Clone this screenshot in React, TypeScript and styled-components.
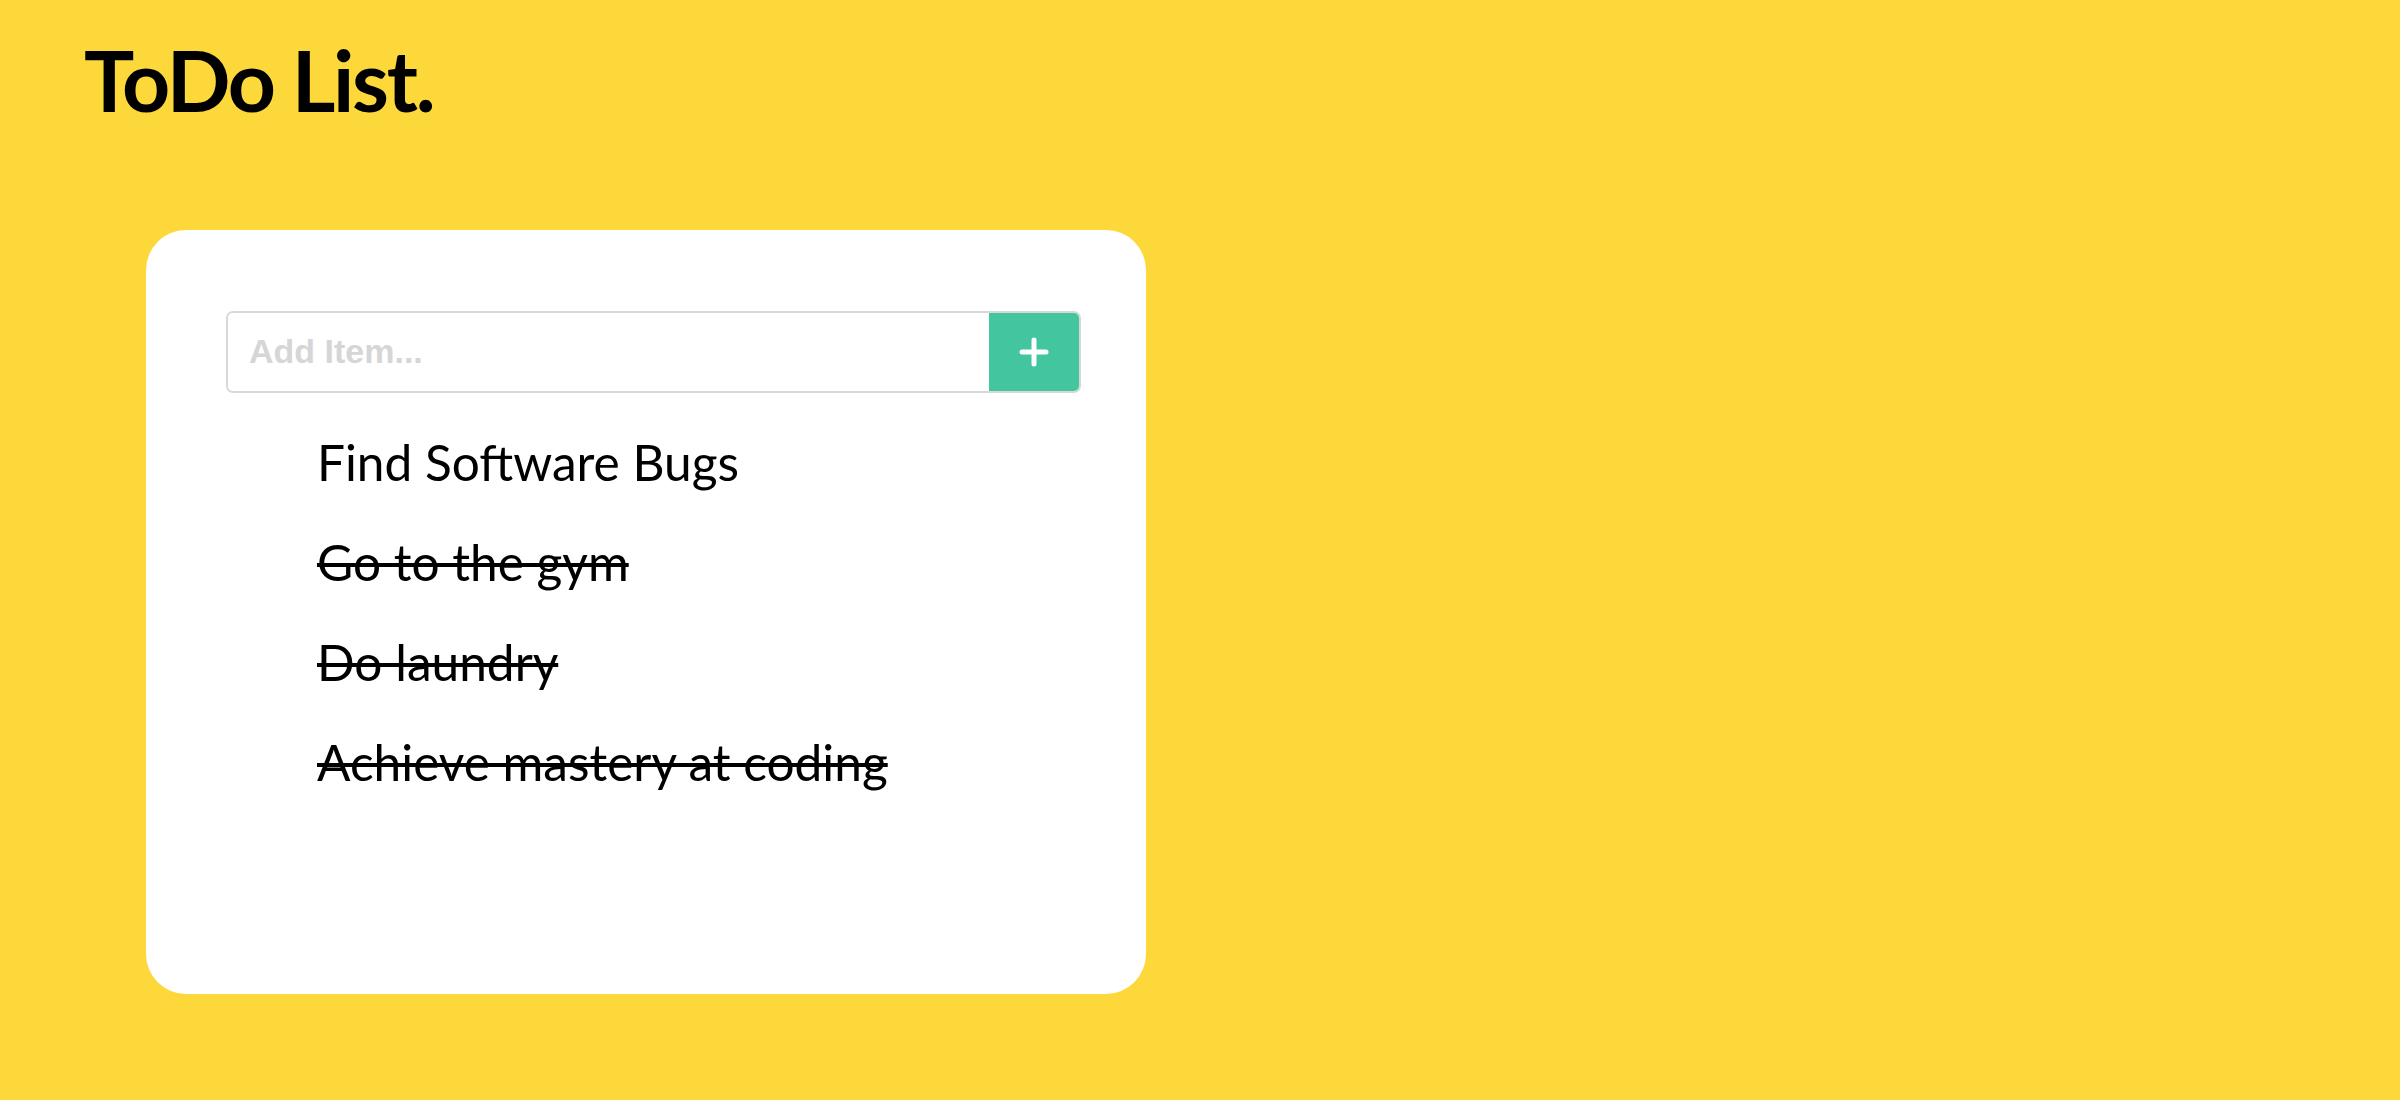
import React from "react";
import styled, { createGlobalStyle } from "styled-components";

const GlobalStyle = createGlobalStyle`
  html, body {
    margin: 0;
    padding: 0;
    background: #fdd83a;
  }
  body {
    font-family: Lato, "Open Sans", Arial, sans-serif;
    color: #000;
  }
  * { box-sizing: border-box; }
`;

const Page = styled.div`
  min-height: 1100px;
  background: #fdd83a;
  padding: 30px 0 0 0;
  display: flex;
  flex-direction: column;
`;

const Title = styled.h1`
  margin: 0 0 99px 84px;
  font-family: Lato, sans-serif;
  font-weight: 700;
  font-size: 84px;
  line-height: 1.2;
  letter-spacing: -2.3px;
`;

const Card = styled.div`
  margin-left: 146px;
  width: 1000px;
  height: 764px;
  background: #fff;
  border-radius: 40px;
  padding: 81px 65px 0 80px;
  display: flex;
  flex-direction: column;
`;

const Form = styled.form`
  display: flex;
  width: 855px;
  height: 82px;
  border: 2px solid #d8d8d8;
  border-radius: 7px;
  overflow: hidden;
  flex-shrink: 0;
`;

const Input = styled.input`
  flex: 1;
  border: none;
  outline: none;
  padding: 0 0 0 21px;
  font-family: "Liberation Sans", Arial, sans-serif;
  font-weight: 700;
  font-size: 34px;
  color: #333;
  background: #fff;
  &::placeholder {
    color: #d6d6d6;
  }
`;

const AddButton = styled.button`
  width: 90px;
  border: none;
  padding: 0;
  background: #43c5a0;
  display: flex;
  align-items: center;
  justify-content: center;
  cursor: pointer;
`;

const List = styled.ul`
  list-style: none;
  margin: 19px 0 0 0;
  padding: 0 0 0 91px;
`;

const Item = styled.li<{ $done?: boolean }>`
  font-family: Lato, sans-serif;
  font-size: 49.6px;
  line-height: 100px;
  white-space: nowrap;
  text-decoration: ${(p) => (p.$done ? "line-through" : "none")};
  text-decoration-thickness: 3.5px;
`;

const items = [
  { text: "Find Software Bugs", done: false },
  { text: "Go to the gym", done: true },
  { text: "Do laundry", done: true },
  { text: "Achieve mastery at coding", done: true },
];

export default function App() {
  return (
    <>
      <GlobalStyle />
      <Page>
        <Title>ToDo List.</Title>
        <Card>
          <Form onSubmit={(e) => e.preventDefault()}>
            <Input placeholder="Add Item..." />
            <AddButton type="submit" aria-label="Add">
              <svg width="30" height="30" viewBox="0 0 30 30">
                <path
                  d="M15 3 V27 M3 15 H27"
                  stroke="#fff"
                  strokeWidth="5"
                  strokeLinecap="round"
                  fill="none"
                />
              </svg>
            </AddButton>
          </Form>
          <List>
            {items.map((it) => (
              <Item key={it.text} $done={it.done}>
                {it.text}
              </Item>
            ))}
          </List>
        </Card>
      </Page>
    </>
  );
}
